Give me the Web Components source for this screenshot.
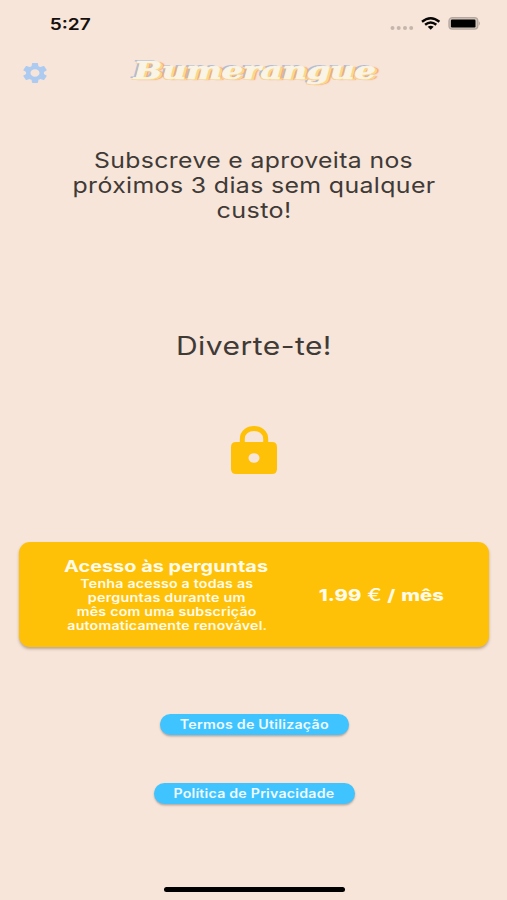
<!DOCTYPE html>
<html lang="pt">
<head>
<meta charset="utf-8">
<title>Bumerangue</title>
<style>
    html, body {
        margin: 0;
        height: 100%;
        background: #f7e5d9;
    }
    body {
        font-family: Inter, "Liberation Sans", sans-serif;
        overflow: hidden;
    }
</style>
</head>
<body>
<subscribe-page></subscribe-page>

<script>
// One line of text, widened to the given width
class WideText extends HTMLElement {
    constructor() {
        super();
        this.attachShadow({ mode: "open" });
        this.shadowRoot.innerHTML = `
            <style>
                :host {
                    display: flex;
                    justify-content: center;
                    white-space: nowrap;
                }
                span {
                    display: block;
                    flex: none;
                }
            </style>
            <span><slot></slot></span>
        `;
    }

    connectedCallback() {
        const target = Number(this.getAttribute("width"));
        const span = this.shadowRoot.querySelector("span");
        this.style.width = target + "px";
        const natural = span.getBoundingClientRect().width;
        if (natural) span.style.transform = `scaleX(${target / natural})`;
    }
}

class StatusBar extends HTMLElement {
    constructor() {
        super();
        this.attachShadow({ mode: "open" });
        this.shadowRoot.innerHTML = `
            <style>
                :host {
                    display: flex;
                    justify-content: space-between;
                    align-items: center;
                    height: 47px;
                    padding: 0 26px 0 50px;
                    box-sizing: border-box;
                    color: #15100e;
                    font-size: 16px;
                    font-weight: 600;
                }
                .icons {
                    display: flex;
                }
                svg {
                    display: block;
                }
            </style>
            <wide-text width="41">5:27</wide-text>
            <div class="icons">
                <svg width="92" height="20" viewBox="0 0 92 20">
                    <g fill="#c5b6ad">
                        <circle cx="3.5" cy="14" r="2"/>
                        <circle cx="9.7" cy="14" r="2"/>
                        <circle cx="16" cy="14" r="2"/>
                        <circle cx="22.2" cy="14" r="2"/>
                    </g>
                    <g fill="none" stroke="#080605" stroke-width="2.4">
                        <path d="M33 7.7 Q41.7 0.7 50.4 7.7"/>
                        <path d="M36.1 10.8 Q41.7 6.2 47.3 10.8"/>
                    </g>
                    <path d="M38.7 12.8 Q41.7 10.6 44.7 12.8 L41.7 15.7 Z" fill="#080605"/>
                    <rect x="60" y="3.7" width="28.8" height="11.4" rx="3.4" fill="#d3c5bb" stroke="#b5a79f" stroke-width="1.3"/>
                    <rect x="61.9" y="5.5" width="24.6" height="7.9" rx="1.2" fill="#000"/>
                    <path d="M89.8 7.1 Q92 9.4 89.8 11.7 Z" fill="#b5a79f"/>
                </svg>
            </div>
        `;
    }
}

class AppHeader extends HTMLElement {
    constructor() {
        super();
        this.attachShadow({ mode: "open" });
        this.shadowRoot.innerHTML = `
            <style>
                :host {
                    display: flex;
                    height: 54px;
                    padding-left: 23px;
                }
                svg {
                    display: block;
                    width: 24px;
                    height: 20px;
                    margin-top: 16px;
                }
                .logo {
                    margin: 8px 0 0 87px;
                    font: italic bold 24px/32px "DejaVu Serif", serif;
                    color: #f9f4e6;
                    -webkit-text-stroke: 0.7px #f9f4e6;
                    text-shadow:
                        2px 0.5px 0.5px #fbd78a,
                        -1px 1px 0.5px #f9cf90,
                        3px 1px 1px #f5a57b,
                        -2px -1.5px 0.5px #b5bdd4;
                }
            </style>
            <svg viewBox="2.4 2.3 19.2 19.4" preserveAspectRatio="none" fill="#adcbf0">
                <path d="M19.14 12.94c.04-.3.06-.61.06-.94 0-.32-.02-.64-.07-.94l2.03-1.58c.18-.14.23-.41.12-.61l-1.92-3.32c-.12-.22-.37-.29-.59-.22l-2.39.96c-.5-.38-1.03-.7-1.62-.94l-.36-2.54c-.04-.24-.24-.41-.48-.41h-3.84c-.24 0-.43.17-.47.41l-.36 2.54c-.59.24-1.13.57-1.62.94l-2.39-.96c-.22-.08-.47 0-.59.22L2.74 8.87c-.12.21-.08.47.12.61l2.03 1.58c-.05.3-.09.63-.09.94s.02.64.07.94l-2.03 1.58c-.18.14-.23.41-.12.61l1.92 3.32c.12.22.37.29.59.22l2.39-.96c.5.38 1.03.7 1.62.94l.36 2.54c.05.24.24.41.48.41h3.84c.24 0 .44-.17.47-.41l.36-2.54c.59-.24 1.13-.56 1.62-.94l2.39.96c.22.08.47 0 .59-.22l1.92-3.32c.12-.22.07-.47-.12-.61zM12 15.6c-1.98 0-3.6-1.62-3.6-3.6s1.62-3.6 3.6-3.6 3.6 1.62 3.6 3.6-1.62 3.6-3.6 3.6z"/>
            </svg>
            <wide-text class="logo" width="242">Bumerangue</wide-text>
        `;
    }
}

class PlanCard extends HTMLElement {
    constructor() {
        super();
        this.attachShadow({ mode: "open" });
        this.shadowRoot.innerHTML = `
            <style>
                :host {
                    display: flex;
                    align-items: center;
                    width: 470px;
                    height: 105px;
                    box-sizing: border-box;
                    padding-left: 45px;
                    border-radius: 11px;
                    background: #ffc107;
                    box-shadow: 0 2px 3px rgba(80, 50, 20, 0.35);
                    color: #fffbe9;
                }
                .info {
                    display: flex;
                    flex-direction: column;
                    align-items: center;
                    width: 204px;
                }
                ::slotted([slot="price"]) {
                    margin-left: 51px;
                }
            </style>
            <div class="info"><slot></slot></div>
            <slot name="price"></slot>
        `;
    }
}

class PillButton extends HTMLElement {
    constructor() {
        super();
        this.attachShadow({ mode: "open" });
        this.shadowRoot.innerHTML = `
            <style>
                :host {
                    display: block;
                }
                button {
                    display: flex;
                    align-items: center;
                    height: 21px;
                    padding: 0 20px;
                    border: none;
                    border-radius: 10.5px;
                    background: #40c4ff;
                    box-shadow: 0 1.5px 2px rgba(70, 60, 60, 0.35);
                    color: #effaff;
                    font: 600 12.5px/20px Inter, "Liberation Sans", sans-serif;
                    letter-spacing: 0.015em;
                    cursor: pointer;
                }
            </style>
            <button><slot></slot></button>
        `;
    }
}

class SubscribePage extends HTMLElement {
    constructor() {
        super();
        this.attachShadow({ mode: "open" });
        this.shadowRoot.innerHTML = `
            <style>
                :host {
                    display: block;
                    width: 507px;
                    height: 900px;
                    background: #f7e5d9;
                    color: #403a37;
                }
                main {
                    display: flex;
                    flex-direction: column;
                    align-items: center;
                    width: 508px;
                }
                .intro {
                    display: flex;
                    flex-direction: column;
                    align-items: center;
                    margin-top: 47px;
                    font-size: 21.5px;
                    line-height: 25px;
                    letter-spacing: 0.015em;
                }
                .fun {
                    margin-top: 107px;
                    font-size: 25px;
                    line-height: 32px;
                    letter-spacing: 0.015em;
                }
                .lock {
                    display: block;
                    margin-top: 64px;
                }
                plan-card {
                    margin-top: 67px;
                }
                .title {
                    margin-bottom: 1px;
                    font-size: 16px;
                    font-weight: 700;
                    line-height: 19px;
                }
                .line {
                    margin-left: 2px;
                    font-size: 11.8px;
                    font-weight: 600;
                    line-height: 14px;
                    letter-spacing: 0.015em;
                }
                .price {
                    font-size: 16px;
                    font-weight: 800;
                    word-spacing: 1px;
                }
                .euro {
                    font-size: 17px;
                    font-weight: 500;
                }
                .terms {
                    margin-top: 67px;
                }
                .privacy {
                    margin-top: 48px;
                }
                .home {
                    width: 181px;
                    height: 5px;
                    margin-top: 83px;
                    border-radius: 3px;
                    background: #000;
                }
            </style>
            <status-bar></status-bar>
            <app-header></app-header>
            <main>
                <div class="intro">
                    <wide-text width="319">Subscreve e aproveita nos</wide-text>
                    <wide-text width="363">próximos 3 dias sem qualquer</wide-text>
                    <wide-text width="75">custo!</wide-text>
                </div>
                <wide-text class="fun" width="156">Diverte-te!</wide-text>
                <svg class="lock" width="46" height="49" viewBox="0 0 46 49">
                    <path d="M11.3 18 V13 C11.3 -1 34.7 -1 34.7 13 V18" fill="none" stroke="#ffc107" stroke-width="5"/>
                    <path fill="#ffc107" fill-rule="evenodd" d="M5 16 H41 Q46 16 46 21 V43 Q46 48 41 48 H5 Q0 48 0 43 V21 Q0 16 5 16 Z M23 27.2 A5.5 4.8 0 1 0 23 36.8 A5.5 4.8 0 1 0 23 27.2 Z"/>
                </svg>
                <plan-card>
                    <wide-text class="title" width="204">Acesso às perguntas</wide-text>
                    <wide-text class="line" width="173">Tenha acesso a todas as</wide-text>
                    <wide-text class="line" width="158">perguntas durante um</wide-text>
                    <wide-text class="line" width="180">mês com uma subscrição</wide-text>
                    <wide-text class="line" width="200">automaticamente renovável.</wide-text>
                    <wide-text class="price" slot="price" width="125">1.99 <span class="euro">€</span> / mês</wide-text>
                </plan-card>
                <pill-button class="terms"><wide-text width="149">Termos de Utilização</wide-text></pill-button>
                <pill-button class="privacy"><wide-text width="161">Política de Privacidade</wide-text></pill-button>
                <div class="home"></div>
            </main>
        `;
    }
}

customElements.define("status-bar", StatusBar);
customElements.define("app-header", AppHeader);
customElements.define("plan-card", PlanCard);
customElements.define("pill-button", PillButton);
customElements.define("subscribe-page", SubscribePage);
// last, so that every line is already laid out when it is measured
customElements.define("wide-text", WideText);
</script>
</body>
</html>
